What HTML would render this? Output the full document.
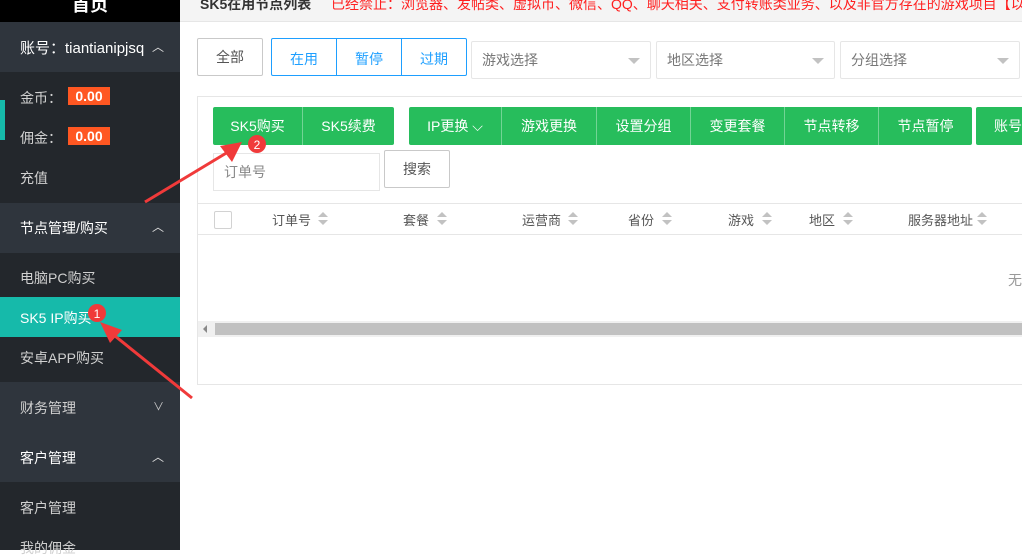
<!DOCTYPE html>
<html><head><meta charset="utf-8"><style>
*{margin:0;padding:0;box-sizing:border-box}
body{width:1022px;height:550px;overflow:hidden;background:#fff;font-family:"Liberation Sans","Noto Sans CJK SC",sans-serif;font-size:14px;position:relative}
.a{position:absolute}
.sb{left:0;top:0;width:180px;height:550px;background:#23272c}
.t{color:#d0d0d0;font-size:14px}
.g{position:absolute;top:107px;height:38px;background:#27bd5c;color:#fff;line-height:38px;text-align:center;font-size:14px}
.sep{border-right:1px solid rgba(255,255,255,.35)}
.sel{position:absolute;top:41px;height:38px;border:1px solid #e6e6e6;border-radius:2px;color:#777;line-height:36px;padding-left:10px}
.sel:after{content:"";position:absolute;right:10px;top:16px;border:6px solid transparent;border-top:6px solid #c2c2c2}
.th{position:absolute;top:210px;font-size:13px;color:#555}
.so{position:absolute;top:212px;width:10px;height:14px}
.so:before{content:"";position:absolute;left:0;top:0;border:5px solid transparent;border-bottom:5px solid #c2c2c2;border-top:0}
.so:after{content:"";position:absolute;left:0;top:8px;border:5px solid transparent;border-top:5px solid #c2c2c2;border-bottom:0}
</style></head><body>
<div class="a sb"></div>
<div class="a" style="left:0;top:0;width:180px;height:22px;background:#000;color:#fff;font-size:18px;font-weight:bold;text-align:center;line-height:10px">首页</div>
<div class="a" style="left:0;top:22px;width:180px;height:50px;background:#2f353d"></div>
<div class="a" style="left:20px;top:37px;color:#fff;font-size:15px">账号：tiantianipjsq</div>
<div class="a" style="left:152px;top:38px;color:#ddd;font-size:12px">︿</div>
<div class="a" style="left:0;top:100px;width:5px;height:40px;background:#16baaa"></div>
<div class="a t" style="left:20px;top:88px">金币：</div>
<div class="a" style="left:68px;top:87px;width:42px;height:18px;background:#ff5722;color:#fff;font-weight:bold;font-size:14px;text-align:center;line-height:18px">0.00</div>
<div class="a t" style="left:20px;top:128px">佣金：</div>
<div class="a" style="left:68px;top:127px;width:42px;height:18px;background:#ff5722;color:#fff;font-weight:bold;font-size:14px;text-align:center;line-height:18px">0.00</div>
<div class="a t" style="left:20px;top:168px">充值</div>
<div class="a" style="left:0;top:203px;width:180px;height:50px;background:#2f353d"></div>
<div class="a" style="left:20px;top:218px;color:#fff">节点管理/购买</div>
<div class="a" style="left:152px;top:218px;color:#ddd;font-size:12px">︿</div>
<div class="a t" style="left:20px;top:268px">电脑PC购买</div>
<div class="a" style="left:0;top:297px;width:180px;height:40px;background:#16baaa"></div>
<div class="a" style="left:20px;top:308px;color:#fff">SK5 IP购买</div>
<div class="a t" style="left:20px;top:348px">安卓APP购买</div>
<div class="a" style="left:0;top:382px;width:180px;height:100px;background:#2f353d"></div>
<div class="a t" style="left:20px;top:398px">财务管理</div>
<div class="a" style="left:153px;top:398px;color:#ccc;font-size:11px">∨</div>
<div class="a" style="left:20px;top:448px;color:#fff">客户管理</div>
<div class="a" style="left:152px;top:448px;color:#ddd;font-size:12px">︿</div>
<div class="a t" style="left:20px;top:498px">客户管理</div>
<div class="a t" style="left:20px;top:538px">我的佣金</div>

<div class="a" style="left:180px;top:0;width:842px;height:22px;background:#f4f4f4;border-bottom:1px solid #e6e6e6"></div>
<div class="a" style="left:200px;top:-6px;font-weight:bold;color:#333;font-size:14px">SK5在用节点列表</div>
<div class="a" style="left:331px;top:-6px;color:#ff2020;font-size:14px;white-space:nowrap">已经禁止：浏览器、发帖类、虚拟币、微信、QQ、聊天相关、支付转账类业务、以及非官方存在的游戏项目【以</div>

<div class="a" style="left:197px;top:38px;width:66px;height:38px;border:1px solid #c9c9c9;border-radius:2px;text-align:center;line-height:36px;color:#555">全部</div>
<div class="a" style="left:271px;top:38px;width:196px;height:38px;border:1px solid #1e9fff;border-radius:2px"></div>
<div class="a" style="left:336px;top:38px;width:1px;height:38px;background:#1e9fff"></div>
<div class="a" style="left:401px;top:38px;width:1px;height:38px;background:#1e9fff"></div>
<div class="a" style="left:271px;top:49px;width:66px;text-align:center;color:#1e9fff">在用</div>
<div class="a" style="left:336px;top:49px;width:66px;text-align:center;color:#1e9fff">暂停</div>
<div class="a" style="left:401px;top:49px;width:66px;text-align:center;color:#1e9fff">过期</div>
<div class="sel" style="left:471px;width:180px">游戏选择</div>
<div class="sel" style="left:656px;width:179px">地区选择</div>
<div class="sel" style="left:840px;width:180px">分组选择</div>

<div class="a" style="left:197px;top:96px;width:830px;height:289px;border:1px solid #e6e6e6"></div>
<div class="g sep" style="left:213px;width:90px;border-radius:2px 0 0 2px">SK5购买</div>
<div class="g" style="left:303px;width:91px;border-radius:0 2px 2px 0">SK5续费</div>
<div class="g sep" style="left:409px;width:93px;border-radius:2px 0 0 2px">IP更换 ⌵</div>
<div class="g sep" style="left:502px;width:95px">游戏更换</div>
<div class="g sep" style="left:597px;width:94px">设置分组</div>
<div class="g sep" style="left:691px;width:94px">变更套餐</div>
<div class="g sep" style="left:785px;width:94px">节点转移</div>
<div class="g" style="left:879px;width:93px;border-radius:0 2px 2px 0">节点暂停</div>
<div class="g" style="left:976px;width:60px;border-radius:2px;text-align:left;padding-left:18px">账号</div>
<div class="a" style="left:213px;top:153px;width:167px;height:38px;border:1px solid #e6e6e6;color:#888;line-height:36px;padding-left:10px">订单号</div>
<div class="a" style="left:384px;top:150px;width:66px;height:38px;border:1px solid #c9c9c9;border-radius:2px;text-align:center;line-height:36px;color:#555">搜索</div>

<div class="a" style="left:198px;top:203px;width:824px;height:1px;background:#e6e6e6"></div>
<div class="a" style="left:198px;top:234px;width:824px;height:1px;background:#e6e6e6"></div>
<div class="a" style="left:214px;top:211px;width:18px;height:18px;border:1px solid #d2d2d2;border-radius:2px"></div>
<div class="th" style="left:272px">订单号</div><div class="so" style="left:318px"></div>
<div class="th" style="left:403px">套餐</div><div class="so" style="left:437px"></div>
<div class="th" style="left:522px">运营商</div><div class="so" style="left:568px"></div>
<div class="th" style="left:628px">省份</div><div class="so" style="left:662px"></div>
<div class="th" style="left:728px">游戏</div><div class="so" style="left:762px"></div>
<div class="th" style="left:809px">地区</div><div class="so" style="left:843px"></div>
<div class="th" style="left:908px">服务器地址</div><div class="so" style="left:977px"></div>
<div class="a" style="left:1008px;top:270px;color:#999;font-size:14px">无</div>
<div class="a" style="left:198px;top:321px;width:824px;height:16px;background:#f0f0f0"></div>
<div class="a" style="left:215px;top:323px;width:807px;height:12px;background:#c1c1c1"></div>
<div class="a" style="left:203px;top:325px;border:4px solid transparent;border-right:4px solid #888;border-left:0"></div>

<svg class="a" style="left:0;top:0" width="1022" height="550">
<g fill="#f03a3a" stroke="#f03a3a">
<line x1="192" y1="398" x2="110" y2="332" stroke-width="3"/>
<polygon points="100,322 122,330 110,343" stroke="none"/>
<line x1="145" y1="202" x2="228" y2="152" stroke-width="3"/>
<polygon points="242,142 232,162 220,146" stroke="none"/>
</g>
<circle cx="97" cy="313" r="9" fill="#f03a3a"/>
<text x="97" y="318" font-size="12" fill="#fff" text-anchor="middle" font-family="Liberation Sans">1</text>
<circle cx="257" cy="144" r="9" fill="#f03a3a"/>
<text x="257" y="149" font-size="12" fill="#fff" text-anchor="middle" font-family="Liberation Sans">2</text>
</svg>
</body></html>
